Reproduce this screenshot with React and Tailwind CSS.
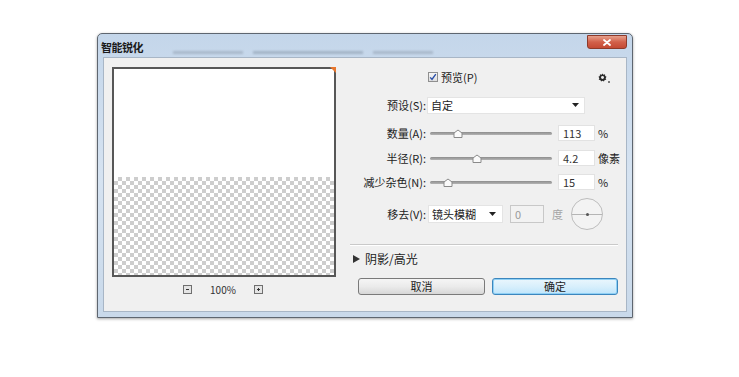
import React from 'react';

const font = { fontFamily: '"Noto Sans CJK SC", "Noto Sans", sans-serif' };

const Thumb = () => (
  <svg width="10" height="10" viewBox="0 0 10 10" className="block">
    <path d="M1 4 L5 1 L9 4 L9 8.5 L1 8.5 Z" fill="#fafafa" stroke="#8a8a8a" strokeWidth="1" />
  </svg>
);

const SliderRow = ({ label, pos, value, unit }) => (
  <div className="flex items-center h-[16px]">
    <span className="w-[76px] text-right">{label}</span>
    <div className="relative ml-[4px] w-[122px] h-[10px] flex items-center">
      <div className="w-full h-[3px] rounded-full bg-gradient-to-b from-[#8d8d8d] to-[#b4b4b4]" />
      <div className="absolute top-[1px]" style={{ left: pos - 5 }}>
        <Thumb />
      </div>
    </div>
    <div className="ml-[6px] w-[37px] h-[16px] bg-white border border-[#e2e2e2] flex items-center px-[4px] text-[#333]">
      {value}
    </div>
    <span className="ml-[3px]">{unit}</span>
  </div>
);

const Arrow = () => (
  <svg width="7" height="4" viewBox="0 0 7 4" className="block">
    <path d="M0 0 H7 L3.5 4 Z" fill="#222" />
  </svg>
);

const Checker = () => (
  <div className="flex-1 bg-white bg-[linear-gradient(45deg,#cdcdcd_25%,transparent_25%,transparent_75%,#cdcdcd_75%),linear-gradient(45deg,#cdcdcd_25%,transparent_25%,transparent_75%,#cdcdcd_75%)] bg-[length:8px_8px] bg-[position:0_0,4px_4px]" />
);

export default function App() {
  return (
    <div className="w-[739px] h-[377px] bg-white pt-[33px] pl-[97px] text-[11px] text-[#222]" style={font}>
      {/* window frame */}
      <div className="w-[536px] h-[285px] border border-[#5e6670] rounded-t-[5px] bg-gradient-to-b from-[#c4d6ea] via-[#d6e3f1] to-[#c9d9ea] flex flex-col px-[5px] pb-[5px] shadow-[0_1px_3px_rgba(0,0,0,0.35)]">
        {/* title bar */}
        <div className="h-[23px] flex items-start">
          <span className="mt-[5px] -ml-[2px] text-[11px] text-[#1b1b1b] font-bold tracking-[-0.5px]">智能锐化</span>
          <div className="flex-1 flex items-end h-full pb-[3px] gap-[10px] pl-[30px] opacity-40">
            <div className="w-[70px] h-[3px] bg-[#7d8a99] blur-[1px]" />
            <div className="w-[110px] h-[3px] bg-[#6e7d8f] blur-[1px]" />
            <div className="w-[60px] h-[3px] bg-[#7d8a99] blur-[1px]" />
          </div>
          <div className="mt-[1px] w-[40px] h-[14px] rounded-b-[3px] border border-[#8d3a2a] bg-gradient-to-b from-[#e6a08c] via-[#d2604a] to-[#c44a34] flex items-center justify-center">
            <svg width="8" height="7" viewBox="0 0 8 7">
              <path d="M1 1 L7 6 M7 1 L1 6" stroke="#fff" strokeWidth="1.8" strokeLinecap="round" />
            </svg>
          </div>
        </div>

        {/* client area */}
        <div className="flex-1 bg-[#f0f0f0] border border-[#a8b6c6] flex pl-[8px] pt-[9px]">
          {/* preview column */}
          <div className="w-[224px] flex flex-col">
            <div className="relative h-[210px] border-2 border-[#575757] flex flex-col bg-white">
              <div className="h-[108px] bg-white" />
              <Checker />
              <div className="absolute -top-[2px] -right-[2px] w-0 h-0 border-t-[6px] border-l-[6px] border-t-[#e8762d] border-l-transparent" />
            </div>
            <div className="flex items-center justify-center mt-[5px] pr-[2px]">
              <div className="w-[9px] h-[9px] border border-[#6f6f6f] bg-[#e4e4e4] flex items-center justify-center">
                <div className="w-[3px] h-[1px] bg-[#333]" />
              </div>
              <span className="mx-[18px] text-[10px] text-[#333]">100%</span>
              <div className="w-[9px] h-[9px] border border-[#6f6f6f] bg-[#e4e4e4] flex items-center justify-center relative">
                <div className="w-[3px] h-[1px] bg-[#333]" />
                <div className="absolute w-[1px] h-[3px] bg-[#333]" />
              </div>
            </div>
          </div>

          {/* settings column */}
          <div className="ml-[14px] w-[270px] flex flex-col">
            <div className="h-[20px] flex items-center">
              <div className="ml-[78px] w-[10px] h-[10px] border border-[#8f8f8f] bg-gradient-to-b from-[#f6f6f6] to-[#dedede] flex items-center justify-center">
                <svg width="8" height="8" viewBox="0 0 8 8">
                  <path d="M1.2 4.4 L3 6.4 L6.8 1.2" fill="none" stroke="#2a4fa8" strokeWidth="1.4" />
                </svg>
              </div>
              <span className="ml-[3px]">预览(P)</span>
              <div className="flex-1" />
              <div className="relative mr-[13px] mt-[1px]">
                <svg width="9" height="9" viewBox="0 0 10 10" className="block">
                  <path d="M5 0.5 L6 2 L7.8 1.4 L8 3.2 L9.5 4.2 L8.5 5.8 L9.2 7.6 L7.4 7.8 L6.6 9.5 L5 8.6 L3.4 9.5 L2.6 7.8 L0.8 7.6 L1.5 5.8 L0.5 4.2 L2 3.2 L2.2 1.4 L4 2 Z" fill="#2b2b2b" />
                  <circle cx="5" cy="5" r="1.6" fill="#f0f0f0" />
                </svg>
                <div className="absolute left-[10px] top-[8px] w-[2px] h-[2px] rounded-full bg-[#555]" />
              </div>
            </div>

            <div className="mt-[10px] flex items-center h-[16px]">
              <span className="w-[76px] text-right">预设(S):</span>
              <div className="ml-[1px] w-[158px] h-[17px] bg-white border border-[#e4e4e4] flex items-center pl-[3px] pr-[5px]">
                <span className="flex-1">自定</span>
                <Arrow />
              </div>
            </div>

            <div className="mt-[12px]">
              <SliderRow label="数量(A):" pos={28} value="113" unit="%" />
            </div>
            <div className="mt-[9px]">
              <SliderRow label="半径(R):" pos={47} value="4.2" unit="像素" />
            </div>
            <div className="mt-[8px]">
              <SliderRow label="减少杂色(N):" pos={18} value="15" unit="%" />
            </div>

            <div className="mt-[8px] h-[32px] flex items-center">
              <span className="w-[76px] text-right">移去(V):</span>
              <div className="ml-[2px] w-[75px] h-[18px] bg-white border border-[#e4e4e4] flex items-center pl-[3px] pr-[6px]">
                <span className="flex-1">镜头模糊</span>
                <Arrow />
              </div>
              <div className="ml-[7px] w-[34px] h-[18px] border border-[#c8c8c8] bg-[#f2f2f2] flex items-center px-[4px] text-[#9a9a9a]">0</div>
              <span className="ml-[8px] text-[#a5a5a5]">度</span>
              <div className="ml-[8px] w-[32px] h-[32px] rounded-full border border-[#bdbdbd] bg-[#f3f3f3] flex items-center justify-center relative">
                <div className="w-full h-[1px] bg-[#b5b5b5]" />
                <div className="absolute w-[3px] h-[3px] rounded-full bg-[#555]" />
              </div>
            </div>

            <div className="mt-[14px] h-[2px] border-t border-[#c9c9c9] border-b border-b-white mr-[2px]" />

            <div className="mt-[5px] h-[16px] flex items-center text-[12px]">
              <svg width="7" height="8" viewBox="0 0 7 8" className="ml-[3px]">
                <path d="M0 0 L7 4 L0 8 Z" fill="#333" />
              </svg>
              <span className="ml-[5px]">阴影/高光</span>
            </div>

            <div className="mt-[11px] flex">
              <button className="ml-[8px] w-[127px] h-[17px] rounded-[3px] border border-[#7a7a7a] bg-gradient-to-b from-[#f5f5f5] via-[#ebebeb] to-[#d7d7d7] text-[11px] flex items-center justify-center">
                取消
              </button>
              <button className="ml-[7px] w-[126px] h-[17px] rounded-[3px] border border-[#3c86bd] bg-gradient-to-b from-[#eaf6fd] via-[#d8effc] to-[#bfe5fb] shadow-[0_0_0_1px_#8fd0f5_inset] text-[11px] flex items-center justify-center">
                确定
              </button>
            </div>
          </div>
        </div>
      </div>
    </div>
  );
}
